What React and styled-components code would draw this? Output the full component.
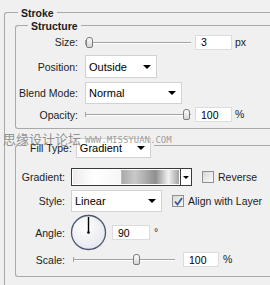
import React from 'react';
import styled, { createGlobalStyle } from 'styled-components';

const GlobalStyle = createGlobalStyle`
  html, body { margin: 0; padding: 0; background: #f0f0f0; }
`;

const Panel = styled.div`
  position: relative;
  width: 270px;
  height: 285px;
  overflow: hidden;
  box-sizing: border-box;
  padding-top: 12px;
  background: #f0f0f0;
  font-family: "Liberation Sans", Arial, sans-serif;
  font-size: 10.5px;
  color: #1c1c1c;
`;

const Group = styled.div`
  margin: ${p => p.$mt || 0}px 0 0 ${p => p.$ml || 0}px;
  padding: 0 0 ${p => p.$pb || 0}px ${p => p.$pl || 0}px;
  border: 1px solid #a9a9a9;
  border-right: none;
  border-bottom: ${p => (p.$open ? 'none' : '1px solid #a9a9a9')};
  border-radius: 3px 0 0 3px;
`;

const Legend = styled.div`
  display: flex;
  width: fit-content;
  align-items: center;
  gap: 4px;
  height: ${p => p.$h}px;
  margin: ${p => p.$mt}px 0 0 ${p => p.$ml}px;
  padding: 0 3px;
  background: #f0f0f0;
  font-weight: ${p => (p.$bold ? 700 : 400)};
`;

const Row = styled.div`
  display: flex;
  align-items: center;
  height: ${p => p.$h}px;
  margin-top: ${p => p.$mt}px;
`;

const Label = styled.span`
  flex: none;
  width: ${p => p.$w}px;
  margin-right: ${p => p.$gap}px;
  text-align: right;
`;

const Select = styled.div`
  flex: none;
  display: flex;
  align-items: center;
  box-sizing: border-box;
  width: ${p => p.$w}px;
  height: ${p => p.$h}px;
  padding-left: 3px;
  background: #fff;
  border: 1px solid #d2d2d2;
  font-size: 11px;
  color: #000;
`;

const Arrow = styled.span`
  margin-left: auto;
  margin-right: 5px;
  border-left: 4px solid transparent;
  border-right: 4px solid transparent;
  border-top: 4px solid #000;
`;

const NumberBox = styled.div`
  flex: none;
  display: flex;
  align-items: center;
  box-sizing: border-box;
  width: ${p => p.$w || 37}px;
  height: 15px;
  margin-left: ${p => p.$ml || 0}px;
  padding-left: 5px;
  background: #fff;
  border: 1px solid #dcdcdc;
  color: #000;
`;

const Unit = styled.span`
  margin-left: ${p => p.$ml || 3}px;
  margin-bottom: ${p => p.$mb || 0}px;
`;

const Slider = styled.div`
  position: relative;
  flex: none;
  width: ${p => p.$w}px;
  height: 11px;
  margin: 0 ${p => p.$mr}px 0 ${p => p.$ml || 0}px;
  &::before {
    content: '';
    position: absolute;
    left: 0;
    right: 0;
    top: 5px;
    height: 1px;
    background: #a3a3a3;
    box-shadow: 0 1px 0 #fff;
  }
  &::after {
    content: '';
    position: absolute;
    left: 0;
    top: 3px;
    width: 1px;
    height: 5px;
    background: #a3a3a3;
  }
`;

const Thumb = styled.span`
  position: absolute;
  z-index: 1;
  top: 0;
  left: ${p => p.$pos}px;
  width: 7px;
  height: 11px;
  box-sizing: border-box;
  border: 1px solid #7d7d7d;
  border-radius: 3px 3px 2px 2px;
  background: linear-gradient(#fdfdfd, #d6d6d6);
`;

const GradientBar = styled.div`
  flex: none;
  display: flex;
  box-sizing: border-box;
  width: 121px;
  height: 18px;
  border: 1px solid #3a3a3a;
  background: #fff;
`;

const GradientFill = styled.div`
  flex: 1;
  border: 1px solid #fff;
  background: linear-gradient(
    to right,
    #ececec 0%,
    #ffffff 20%,
    #f6f6f6 45%,
    #a9a9a9 46%,
    #c9c9c9 58%,
    #b4b4b4 66%,
    #8f8f8f 78%,
    #f2f2f2 90%,
    #a2a2a2 100%
  );
`;

const GradientDrop = styled.div`
  flex: none;
  width: 10px;
  display: flex;
  align-items: center;
  justify-content: center;
  border-left: 1px solid #3a3a3a;
  &::after {
    content: '';
    border-left: 3px solid transparent;
    border-right: 3px solid transparent;
    border-top: 3px solid #000;
  }
`;

const CheckItem = styled.label`
  display: flex;
  align-items: center;
  gap: 4px;
  margin-left: ${p => p.$ml}px;
  white-space: nowrap;
`;

const Box = styled.span`
  flex: none;
  display: flex;
  align-items: center;
  justify-content: center;
  width: 12px;
  height: 12px;
  box-sizing: border-box;
  border: 1px solid #8f9092;
  background: linear-gradient(135deg, #d9d9d9, #fafafa);
`;

const Watermark = styled.div`
  position: absolute;
  left: 3px;
  top: 132px;
  display: flex;
  align-items: flex-end;
  gap: 4px;
  pointer-events: none;
`;

const WmCn = styled.span`
  font-family: "Noto Sans CJK SC", sans-serif;
  font-size: 13px;
  line-height: 14px;
  color: rgba(120, 120, 120, 0.8);
`;

const WmUrl = styled.span`
  font-family: "DejaVu Sans Mono", monospace;
  font-size: 9px;
  line-height: 11px;
  color: rgba(140, 140, 140, 0.85);
`;

const Checkbox = ({ checked, children, ml }) => (
  <CheckItem $ml={ml}>
    <Box>
      {checked && (
        <svg width="9" height="9" viewBox="0 0 9 9">
          <path d="M1 4.5 L3.5 7.5 L8 1" fill="none" stroke="#3c5aa0" strokeWidth="1.8" />
        </svg>
      )}
    </Box>
    {children}
  </CheckItem>
);

const Dial = () => (
  <svg width="37" height="37" viewBox="0 0 37 37">
    <defs>
      <radialGradient id="dialFill" cx="40%" cy="35%" r="70%">
        <stop offset="0%" stopColor="#ffffff" />
        <stop offset="100%" stopColor="#e4e6ec" />
      </radialGradient>
    </defs>
    <circle cx="18.5" cy="18.5" r="17" fill="url(#dialFill)" stroke="#4b5675" strokeWidth="1.3" />
    <line x1="18.5" y1="18.5" x2="18.5" y2="3" stroke="#000" strokeWidth="1.4" />
    <circle cx="18.5" cy="18.5" r="1.3" fill="#000" />
  </svg>
);

const App = () => {
  return (
    <Panel>
      <GlobalStyle />
      <Group $ml={4} $pl={10} $pb={30} $open>
        <Legend $h={13} $mt={-7} $ml={3} $bold>Stroke</Legend>

        <Group $mt={6} $pb={6}>
          <Legend $h={13} $mt={-7} $ml={12} $bold>Structure</Legend>
          <Row $h={16} $mt={2}>
            <Label $w={62} $gap={7}>Size:</Label>
            <Slider $w={106} $mr={4}>
              <Thumb $pos={1} />
            </Slider>
            <NumberBox>3</NumberBox>
            <Unit>px</Unit>
          </Row>
          <Row $h={23} $mt={5}>
            <Label $w={62} $gap={7}>Position:</Label>
            <Select $w={72} $h={23}>Outside<Arrow /></Select>
          </Row>
          <Row $h={22} $mt={4}>
            <Label $w={62} $gap={7}>Blend Mode:</Label>
            <Select $w={97} $h={22}>Normal<Arrow /></Select>
          </Row>
          <Row $h={15} $mt={3}>
            <Label $w={62} $gap={7}>Opacity:</Label>
            <Slider $w={106} $mr={4}>
              <Thumb $pos={98} />
            </Slider>
            <NumberBox>100</NumberBox>
            <Unit $mb={2}>%</Unit>
          </Row>
        </Group>

        <Group $mt={16} $pb={9}>
          <Legend $h={20} $mt={-8} $ml={11}>
            Fill Type:
            <Select $w={75} $h={20}>Gradient<Arrow /></Select>
          </Legend>
          <Row $h={18} $mt={10}>
            <Label $w={49} $gap={6}>Gradient:</Label>
            <GradientBar>
              <GradientFill />
              <GradientDrop />
            </GradientBar>
            <Checkbox ml={10}>Reverse</Checkbox>
          </Row>
          <Row $h={22} $mt={4}>
            <Label $w={49} $gap={6}>Style:</Label>
            <Select $w={91} $h={22}>Linear<Arrow /></Select>
            <Checkbox ml={10} checked>Align with Layer</Checkbox>
          </Row>
          <Row $h={37} $mt={2}>
            <Label $w={49} $gap={5}>Angle:</Label>
            <Dial />
            <NumberBox $w={38} $ml={5}>90</NumberBox>
            <Unit $ml={4} $mb={2}>°</Unit>
          </Row>
          <Row $h={15} $mt={1}>
            <Label $w={49} $gap={7}>Scale:</Label>
            <Slider $w={102} $mr={8} $ml={1}>
              <Thumb $pos={60} />
            </Slider>
            <NumberBox $w={36}>100</NumberBox>
            <Unit $ml={4} $mb={2}>%</Unit>
          </Row>
        </Group>
      </Group>

      <Watermark>
        <WmCn>思缘设计论坛</WmCn>
        <WmUrl>WWW.MISSYUAN.COM</WmUrl>
      </Watermark>
    </Panel>
  );
};

export default App;
